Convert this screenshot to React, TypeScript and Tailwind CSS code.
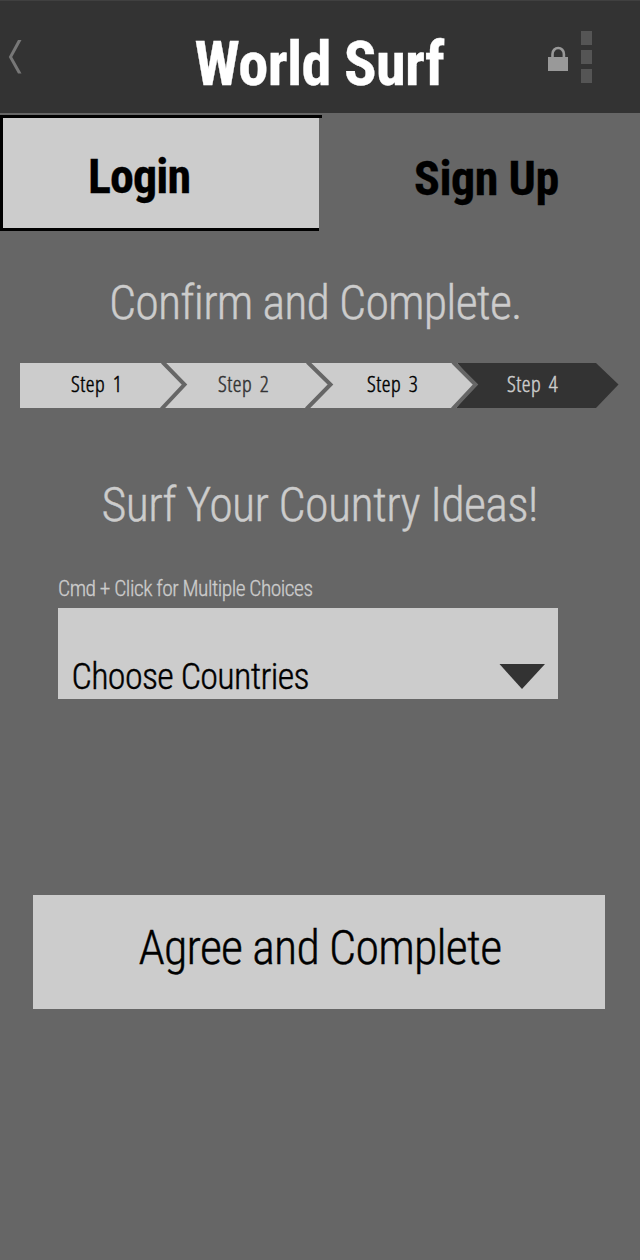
import React from "react";

const condensed = "font-['Roboto_Condensed',Roboto,sans-serif] [font-stretch:75%] whitespace-nowrap";

const steps = [
  { label: "Step 1", x: 51, className: "text-black" },
  { label: "Step 2", x: 198, className: "text-[#333333]" },
  { label: "Step 3", x: 347, className: "text-black" },
  { label: "Step 4", x: 487, className: "text-[#cccccc]" },
];

function Header() {
  return (
    <header className="flex h-[113px] border-t border-[#404040] bg-[#333333]">
      <div className="w-[194.500px] pt-[39px] pl-[8px]">
        <svg width="14" height="34" viewBox="0 0 14 34">
          <path d="M10 0 H13.500 L4.200 17 L13.500 33.500 H10 L0.800 17 Z" fill="#777777" />
        </svg>
      </div>
      <h1 className={`${condensed} w-[353.500px] pt-[26px] text-[60.500px] leading-[76px] font-bold tracking-[-0.7px] text-white [-webkit-text-stroke:0.3px_currentColor]`}>
        World Surf
      </h1>
      <svg className="mt-[45px]" width="21" height="26" viewBox="0 0 21 26">
        <path d="M4.500 12 V8 A5.700 6 0 0 1 15.900 8 V12" fill="none" stroke="#999999" strokeWidth="2.6" />
        <path d="M0 11 H20 V25 H0 Z" fill="#999999" />
      </svg>
      <div className="mt-[30px] ml-[12px] flex flex-col gap-[5px]">
        <span className="h-[14px] w-[11px] bg-[#555555]" />
        <span className="h-[14px] w-[11px] bg-[#555555]" />
        <span className="h-[14px] w-[11px] bg-[#555555]" />
      </div>
    </header>
  );
}

function Tabs() {
  return (
    <nav className="mt-[2px] flex h-[116px]">
      <div className="w-[322px]">
        <div className="h-[3px] bg-black" />
        <button className="flex h-[113px] w-[319px] items-start border-b-[3px] border-l-[3px] border-black bg-[#cccccc] pt-[29px] pl-[85px] text-left">
          <span className={`${condensed} text-[48px] leading-[60px] font-bold tracking-[-0.9px] text-black [-webkit-text-stroke:0.3px_currentColor]`}>Login</span>
        </button>
      </div>
      <button className="flex flex-1 items-start pt-[34px] pl-[92px] text-left">
        <span className={`${condensed} text-[48px] leading-[60px] font-bold tracking-[-0.45px] text-black [-webkit-text-stroke:0.3px_currentColor]`}>Sign Up</span>
      </button>
    </nav>
  );
}

function Steps() {
  return (
    <div className="relative mt-[30px] ml-5 h-[45px] w-[600px]">
      <svg width="600" height="45" viewBox="0 0 600 45">
        <path d="M0 0 H576 L598.500 21.500 L576 45 H0 Z" fill="#333333" />
        <path d="M0 0 H437 L456 21.500 L436 45 H0 Z" fill="#cccccc" />
        <g fill="none" stroke="#666666" strokeWidth="4">
          <path d="M142.500 -1 L164.500 21.500 L141.500 46" />
          <path d="M287.500 -1 L310.500 21.500 L286.500 46" />
          <path d="M433 -1 L455.500 21.500 L432.500 46" />
        </g>
      </svg>
      {steps.map((s) => (
        <span
          key={s.label}
          className={`absolute top-[5px] font-['Open_Sans',sans-serif] text-[22px] leading-[30px] font-light tracking-[0.5px] whitespace-nowrap [font-stretch:75%] [word-spacing:3px] [-webkit-text-stroke:0.45px_currentColor] ${s.className}`}
          style={{ left: s.x }}
        >
          {s.label}
        </span>
      ))}
    </div>
  );
}

export default function App() {
  return (
    <div className="flex h-[1260px] w-[640px] flex-col overflow-hidden bg-[#666666]">
      <Header />
      <Tabs />
      <h2 className={`${condensed} mt-[42px] ml-[109px] text-[48px] leading-[60px] font-light tracking-[-0.85px] text-[#cccccc] [-webkit-text-stroke:0.4px_currentColor]`}>
        Confirm and Complete.
      </h2>
      <Steps />
      <h2 className={`${condensed} mt-[67px] ml-[101.500px] text-[48px] leading-[60px] font-light tracking-[-0.65px] text-[#cccccc] [-webkit-text-stroke:0.4px_currentColor]`}>
        Surf Your Country Ideas!
      </h2>
      <p className={`${condensed} mt-[39px] ml-[58px] text-[21.500px] leading-[29px] font-light tracking-[-0.52px] text-[#cccccc] [-webkit-text-stroke:0.3px_currentColor]`}>
        Cmd + Click for Multiple Choices
      </p>
      <button className="mt-[5px] ml-[58px] flex h-[90.500px] w-[500px] items-start justify-between bg-[#cccccc] pr-[13px] pl-[13.500px]">
        <span className={`${condensed} pt-[47px] text-[36px] leading-[44px] font-light tracking-[-0.65px] text-black [-webkit-text-stroke:0.4px_currentColor]`}>
          Choose Countries
        </span>
        <svg className="mt-[56px]" width="46" height="25" viewBox="0 0 46 25">
          <path d="M0.500 0 H46 L23 25 Z" fill="#333333" />
        </svg>
      </button>
      <button className="mt-[196.500px] ml-[32.500px] flex h-[114px] w-[572.500px] bg-[#cccccc] pt-[23px] pl-[106px]">
        <span className={`${condensed} text-[48px] leading-[60px] font-light tracking-[-0.8px] text-black [-webkit-text-stroke:0.4px_currentColor]`}>
          Agree and Complete
        </span>
      </button>
    </div>
  );
}
